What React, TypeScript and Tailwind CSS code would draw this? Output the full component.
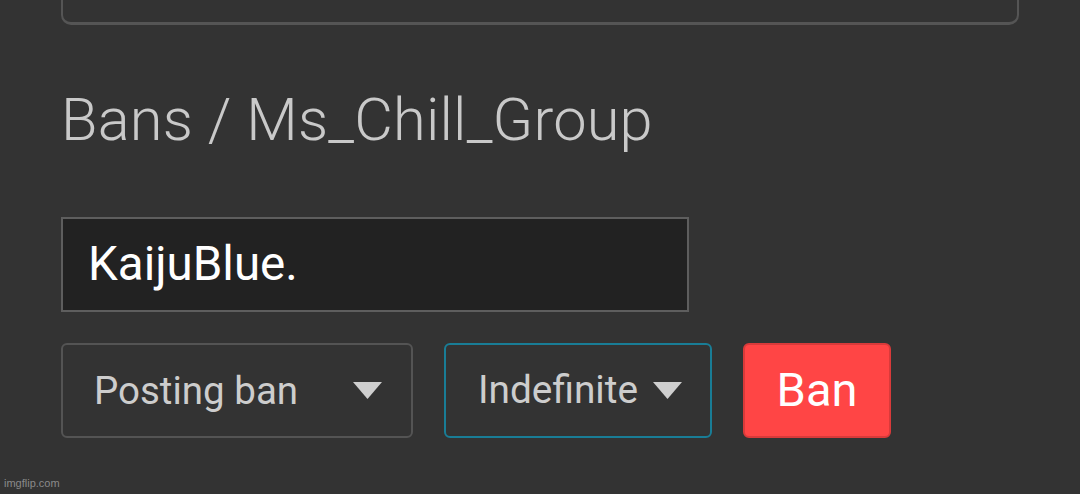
import React from 'react';

const Caret: React.FC = () => (
  <svg width="29" height="17" viewBox="0 0 29 17" className="shrink-0">
    <polygon points="0,0 29,0 14.5,17" fill="#cfcfcf" />
  </svg>
);

const App: React.FC = () => {
  return (
    <div className="relative w-[1080px] h-[494px] overflow-hidden bg-[#333333] font-['Roboto',sans-serif]">
      <div className="px-[61px]">
        {/* previous panel, cut off at the top */}
        <div className="w-[958px] h-[25px] border-x-2 border-b-[3px] border-[#555555] rounded-b-[10px]" />

        <h1 className="mt-[61px] text-[59.5px] leading-[68px] font-light text-[#c9c9c9] tracking-[0.2px]">
          Bans / Ms_Chill_Group
        </h1>

        <div className="mt-[63px] w-[628px] h-[95px] border-2 border-[#5e5e5e] bg-[#222222] flex items-center pl-[25px]">
          <span className="text-[47.5px] text-white leading-none">KaijuBlue.</span>
        </div>

        <div className="mt-[31px] flex items-center gap-[31px]">
          <div className="w-[352px] h-[95px] border-2 border-[#545454] rounded-[6px] flex items-center justify-between pl-[31px] pr-[29px]">
            <span className="text-[38.5px] text-[#cdcdcd]">Posting ban</span>
            <Caret />
          </div>
          <div className="w-[268px] h-[95px] border-2 border-[#197d96] rounded-[6px] flex items-center pl-[32px] gap-[15px]">
            <span className="text-[38.8px] text-[#cdcdcd]">Indefinite</span>
            <Caret />
          </div>
          <div className="w-[148px] h-[95px] border-2 border-[#d93a3a] bg-[#ff4545] rounded-[6px] flex items-center justify-center">
            <span className="text-[47px] text-white">Ban</span>
          </div>
        </div>
      </div>

      <span className="absolute left-[4px] bottom-[3px] text-[11px] text-[#8a8a8a] font-['Liberation_Sans',sans-serif]">
        imgflip.com
      </span>
    </div>
  );
};

export default App;
